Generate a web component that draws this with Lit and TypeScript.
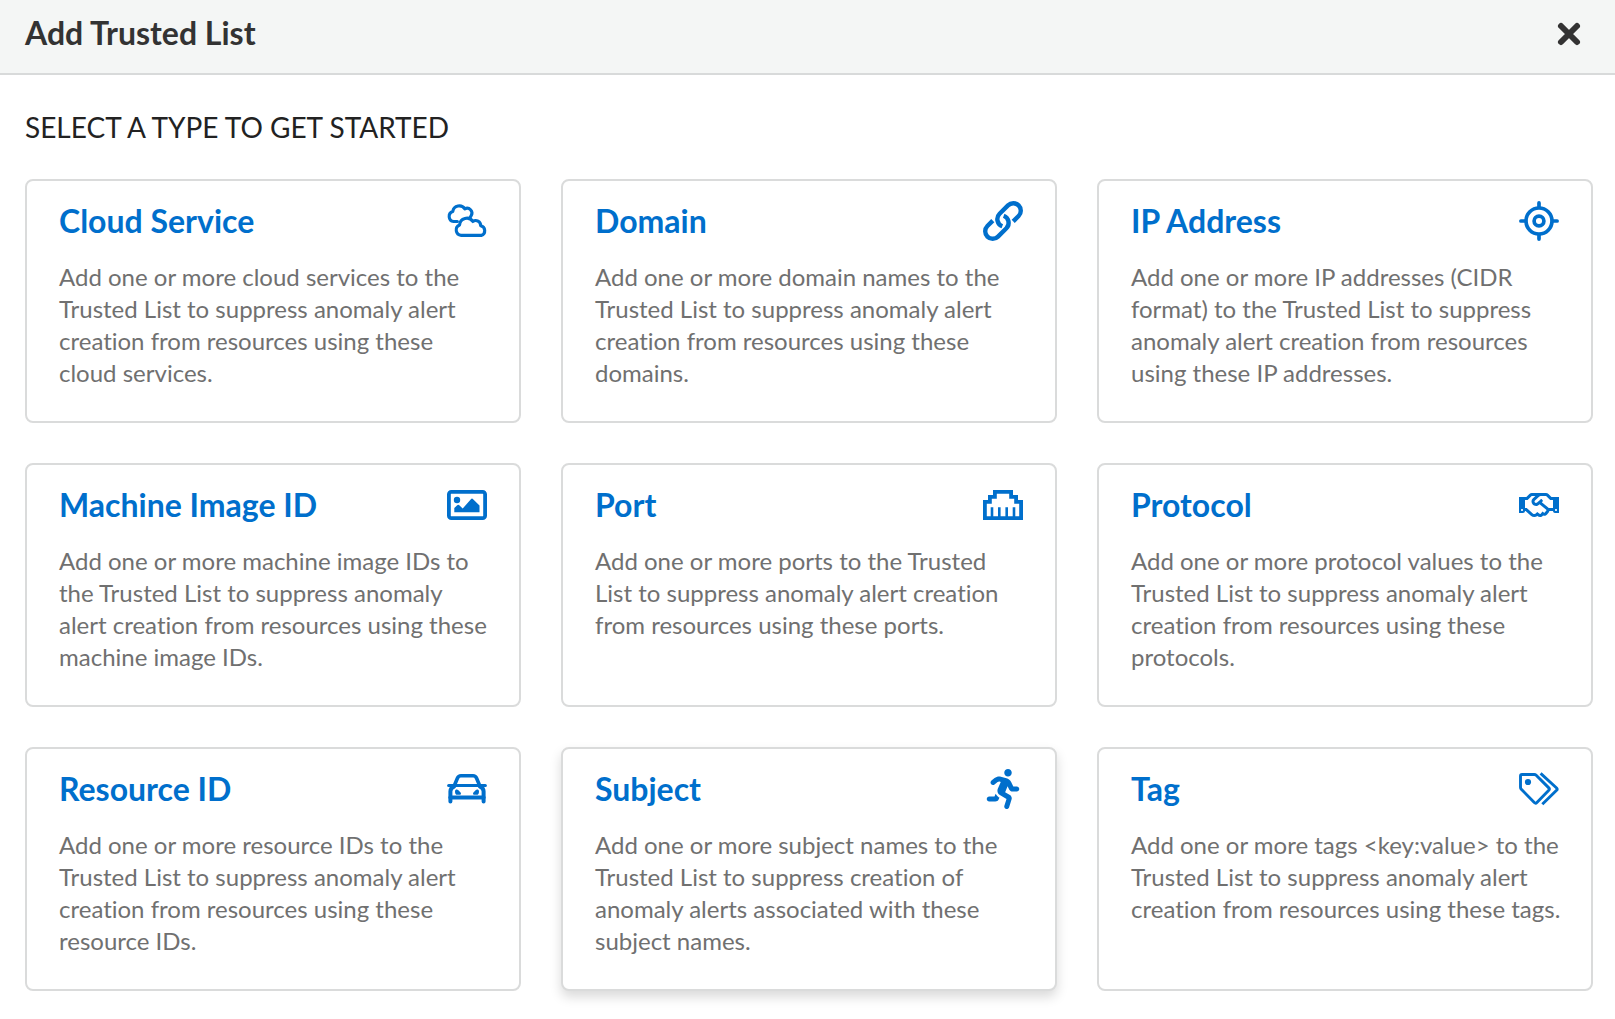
import { LitElement, html, svg, css, type SVGTemplateResult } from "lit";
import { customElement, property, state } from "lit/decorators.js";
import { classMap } from "lit/directives/class-map.js";

const icons: Record<string, SVGTemplateResult> = {
  cloud: svg`<g fill="none" stroke="currentColor" stroke-width="3.1" stroke-linejoin="round" stroke-linecap="round">
    <path d="M14.2 34.4a5.4 5.4 0 0 1-1.6-10.4a7.2 7.2 0 0 1 13.2-3.5a4.9 4.9 0 0 1 7.8 4.2a5 5 0 0 1 .6 9.7z"/>
    <path d="M10.4 20.5H6.6A5.2 5.2 0 0 1 5.8 10.4A6.6 6.6 0 0 1 17.8 7.9A4.8 4.8 0 0 1 24.2 14.6L22.6 17.4"/></g>`,
  link: svg`<g fill="none" stroke="currentColor" stroke-width="4.4">
    <path d="M30.2 20.4L35.6 15A7.4 7.4 0 0 0 25 4.4L16.6 12.8A7.5 7.5 0 0 0 19.3 25.2"/>
    <path d="M9.8 19.6L4.4 25A7.4 7.4 0 0 0 15 35.6L23.4 27.2A7.5 7.5 0 0 0 20.7 14.8"/></g>`,
  target: svg`<g fill="none" stroke="currentColor" stroke-width="3.7">
    <circle cx="20" cy="20" r="13"/><circle cx="20" cy="20" r="4.9"/>
    <path stroke-linecap="round" d="M20 1.9V6M20 34v4.1M1.9 20H6M34 20h4.1"/></g>`,
  image: svg`<rect x="1.9" y="6.9" width="36.2" height="26.2" rx="2.4" fill="none" stroke="currentColor" stroke-width="3.8"/>
    <circle cx="10" cy="15" r="3.2" fill="currentColor"/>
    <path fill="currentColor" d="M7.3 27.3V23l2.9-2.8a1.5 1.5 0 0 1 2.1 0l3.4 3.2 8.2-9.2a1.5 1.5 0 0 1 2.2 0l6.4 6.4v6.7z"/>`,
  port: svg`<path fill="none" stroke="currentColor" stroke-width="3.8" stroke-linejoin="miter" d="M1.9 33.1V16.9H6.9V11.9H11.9V6.9H28.1V11.9H33.1V16.9H38.1V33.1Z"/>
    <path stroke="currentColor" stroke-width="2.6" d="M9 22.3V32M16.3 22.3V32M23.7 22.3V32M31 22.3V32"/>`,
  handshake: svg`<g transform="translate(0 4) scale(.0625)"><path fill="currentColor" d="M519.2 127.9l-47.6-47.6A56.252 56.252 0 0 0 432 64H205.2c-14.8 0-29.1 5.9-39.6 16.3L118 127.9H0v255.7h64c17.6 0 31.8-14.2 31.9-31.7h9.1l84.6 76.4c30.9 25.1 73.8 25.7 105.6 3.8 12.5 10.8 26 15.9 41.1 15.9 18.2 0 35.3-7.4 48.8-24 22.1 8.7 48.2 2.6 64-16.8l26.2-32.3c5.6-6.9 9.1-14.8 10.9-23h57.9c.1 17.5 14.4 31.7 31.9 31.7h64V127.9H519.2zM48 351.6c-8.8 0-16-7.2-16-16s7.2-16 16-16 16 7.2 16 16c0 8.9-7.2 16-16 16zm390-6.9l-26.1 32.2c-2.8 3.4-7.8 4-11.3 1.2l-23.9-19.4-30 36.5c-6 7.3-15 4.8-18 2.4l-36.8-31.5-15.6 19.2c-13.9 17.1-39.2 19.7-55.3 6.6l-97.3-88H96V175.8h41.9l61.7-61.6c2-.8 3.7-1.5 5.7-2.3H262l-38.7 35.5c-29.4 26.9-31.1 72.3-4.4 101.3 14.8 16.2 61.2 41.2 101.5 4.4l8.2-7.5 108.2 87.8c3.4 2.8 3.9 7.9 1.2 11.3zm106-40.8h-69.2c-2.3-2.8-4.9-5.4-7.7-7.7l-102.7-83.4 12.5-11.4c6.5-6 7-16.1 1-22.6L367 167.1c-6-6.5-16.1-6.9-22.6-1l-55.2 50.6c-9.5 8.7-25.7 9.4-34.6 0-9.3-9.9-8.5-25.1 1.2-33.9l65.6-60.1c7.4-6.8 17-10.5 27-10.5l83.7-.2c2.1 0 4.1.8 5.5 2.3l61.7 61.6H544v128zm48 47.7c-8.8 0-16-7.2-16-16s7.2-16 16-16 16 7.2 16 16c0 8.9-7.2 16-16 16z"/></g>`,
  car: svg`<g fill="none" stroke="currentColor" stroke-width="3.6" stroke-linejoin="round" stroke-linecap="round">
    <path d="M7.6 16L10.4 9.2Q11.4 6.8 14 6.8H26Q28.6 6.8 29.6 9.2L32.4 16"/>
    <path stroke-width="3" d="M1.6 16.6H38.4"/>
    <path stroke-width="4" d="M7 17.6Q3.4 19 3.4 22.4V32.6M33 17.6Q36.6 19 36.6 22.4V32.6"/>
    <path stroke-width="4" d="M3.4 28.4H36.6"/></g>
    <path fill="currentColor" d="M8 22.4C8 20.4 10.2 20.2 11.4 21.2L13.6 23.4C14.6 24.8 13.6 25.8 12.4 25.8H10.4C8.8 25.8 8 24.8 8 22.4ZM32 22.4C32 20.4 29.8 20.2 28.6 21.2L26.4 23.4C25.4 24.8 26.4 25.8 27.6 25.8H29.6C31.2 25.8 32 24.8 32 22.4Z"/>`,
  runner: svg`<g transform="translate(3.75 0) scale(.078125)"><path fill="currentColor" d="M272 96c26.51 0 48-21.49 48-48S298.51 0 272 0s-48 21.49-48 48 21.49 48 48 48zM113.69 317.47l-14.8 34.52H32c-17.67 0-32 14.33-32 32s14.33 32 32 32h77.45c19.25 0 36.58-11.44 44.11-29.09l8.79-20.52-10.67-6.3c-17.32-10.23-30.06-25.37-37.99-42.61zM384 223.99h-44.03l-26.06-53.25c-12.5-25.55-35.45-44.23-61.78-50.94l-71.08-21.14c-28.3-6.8-57.77-.55-80.84 17.14l-39.67 30.41c-14.03 10.75-16.69 30.83-5.92 44.86s30.84 16.66 44.86 5.92l39.69-30.41c7.67-5.89 17.44-8 25.27-6.14l14.7 4.37-37.46 87.39c-12.62 29.48-1.31 64.01 26.3 80.31l84.98 50.17-27.47 87.73c-5.28 16.86 4.11 34.82 20.97 40.09 3.19 1 6.41 1.48 9.58 1.48 13.61 0 26.23-8.77 30.52-22.45l31.64-101.06c5.91-20.77-2.89-43.08-21.64-54.3l-61.24-36.14 31.31-78.28 20.27 41.43c8 16.34 24.92 26.89 43.11 26.89H384c17.67 0 32-14.33 32-32s-14.33-31.99-32-31.99z"/></g>`,
  tags: svg`<g fill="none" stroke="currentColor" stroke-width="2.9" stroke-linejoin="round">
    <path d="M3 5.5H15.2Q16.4 5.5 17.2 6.3L29.8 18.9Q31 20.1 29.8 21.3L17.9 33.5Q16.6 34.8 15.3 33.5L2.3 20.2Q1.5 19.4 1.5 18.2V7Q1.5 5.5 3 5.5Z"/>
    <path d="M21.6 4.4L37.6 19Q38.8 20.1 37.6 21.3L23.3 35.3"/></g>
    <circle cx="9" cy="13" r="3.1" fill="currentColor"/>`,
};

interface TrustedType {
  title: string;
  icon: string;
  text: string;
}

const types: TrustedType[] = [
  { title: "Cloud Service", icon: "cloud", text: "Add one or more cloud services to the Trusted List to suppress anomaly alert creation from resources using these cloud services." },
  { title: "Domain", icon: "link", text: "Add one or more domain names to the Trusted List to suppress anomaly alert creation from resources using these domains." },
  { title: "IP Address", icon: "target", text: "Add one or more IP addresses (CIDR format) to the Trusted List to suppress anomaly alert creation from resources using these IP addresses." },
  { title: "Machine Image ID", icon: "image", text: "Add one or more machine image IDs to the Trusted List to suppress anomaly alert creation from resources using these machine image IDs." },
  { title: "Port", icon: "port", text: "Add one or more ports to the Trusted List to suppress anomaly alert creation from resources using these ports." },
  { title: "Protocol", icon: "handshake", text: "Add one or more protocol values to the Trusted List to suppress anomaly alert creation from resources using these protocols." },
  { title: "Resource ID", icon: "car", text: "Add one or more resource IDs to the Trusted List to suppress anomaly alert creation from resources using these resource IDs." },
  { title: "Subject", icon: "runner", text: "Add one or more subject names to the Trusted List to suppress creation of anomaly alerts associated with these subject names." },
  { title: "Tag", icon: "tags", text: "Add one or more tags <key:value> to the Trusted List to suppress anomaly alert creation from resources using these tags." },
];

@customElement("type-card")
class TypeCard extends LitElement {
  @property({ attribute: false }) type!: TrustedType;
  @property({ type: Boolean }) raised = false;

  static styles = css`
    :host {
      display: grid;
    }
    .card {
      display: flex;
      flex-direction: column;
      gap: 20px;
      min-width: 0;
      box-sizing: border-box;
      margin: 0;
      padding: 20px 28px 32px 32px;
      border: 2px solid #dadbdb;
      border-radius: 8px;
      background: #fff;
      font: inherit;
      font-variant-ligatures: none;
      text-align: left;
      cursor: pointer;
    }
    .raised {
      box-shadow: 0 6px 12px rgba(0, 0, 0, 0.15);
    }
    .head {
      display: flex;
      align-items: center;
      justify-content: space-between;
      padding-right: 4px;
      color: #006fcc;
    }
    .title {
      font-size: 32px;
      line-height: 40px;
      font-weight: 700;
    }
    .icon {
      width: 40px;
      height: 40px;
      flex: none;
    }
    .text {
      font-size: 24px;
      line-height: 32px;
      color: #707070;
    }
  `;

  render() {
    return html`<button type="button" class=${classMap({ card: true, raised: this.raised })}>
      <span class="head">
        <span class="title">${this.type.title}</span>
        <svg class="icon" viewBox="0 0 40 40" aria-hidden="true">${icons[this.type.icon]}</svg>
      </span>
      <span class="text">${this.type.text}</span>
    </button>`;
  }
}

@customElement("app-root")
class AppRoot extends LitElement {
  @state() private current = "Subject";

  static styles = css`
    :host {
      display: block;
      min-height: 100vh;
      background: #fff;
      font-family: Lato, "Liberation Sans", sans-serif;
    }
    .bar {
      display: flex;
      align-items: center;
      justify-content: space-between;
      padding: 13px 32px 20px 25px;
      border-bottom: 2px solid #d8dada;
      background: #f4f6f5;
      color: #333;
    }
    .heading {
      margin: 0;
      font-size: 32px;
      line-height: 40px;
      font-weight: 700;
    }
    .close {
      display: flex;
      padding: 0;
      border: 0;
      background: none;
      color: inherit;
      cursor: pointer;
    }
    .cross {
      width: 28px;
      height: 28px;
    }
    .content {
      padding: 32px 22px 28px 25px;
    }
    .prompt {
      margin: 0 0 32px;
      font-size: 28px;
      line-height: 40px;
      font-weight: 400;
      color: #222;
      text-transform: uppercase;
    }
    .grid {
      display: grid;
      grid-template-columns: repeat(3, minmax(0, 1fr));
      grid-auto-rows: 1fr;
      gap: 40px;
    }
  `;

  render() {
    return html`
      <header class="bar">
        <h1 class="heading">Add Trusted List</h1>
        <button type="button" class="close" aria-label="Close">
          <svg class="cross" viewBox="0 0 28 28" aria-hidden="true">
            <path d="M6 7L22 23M22 7L6 23" stroke="currentColor" stroke-width="6" stroke-linecap="round" />
          </svg>
        </button>
      </header>
      <main class="content">
        <h2 class="prompt">Select a type to get started</h2>
        <div class="grid">
          ${types.map(
            (t) => html`<type-card
              .type=${t}
              ?raised=${this.current === t.title}
              @mouseenter=${() => (this.current = t.title)}
            ></type-card>`,
          )}
        </div>
      </main>
    `;
  }
}
